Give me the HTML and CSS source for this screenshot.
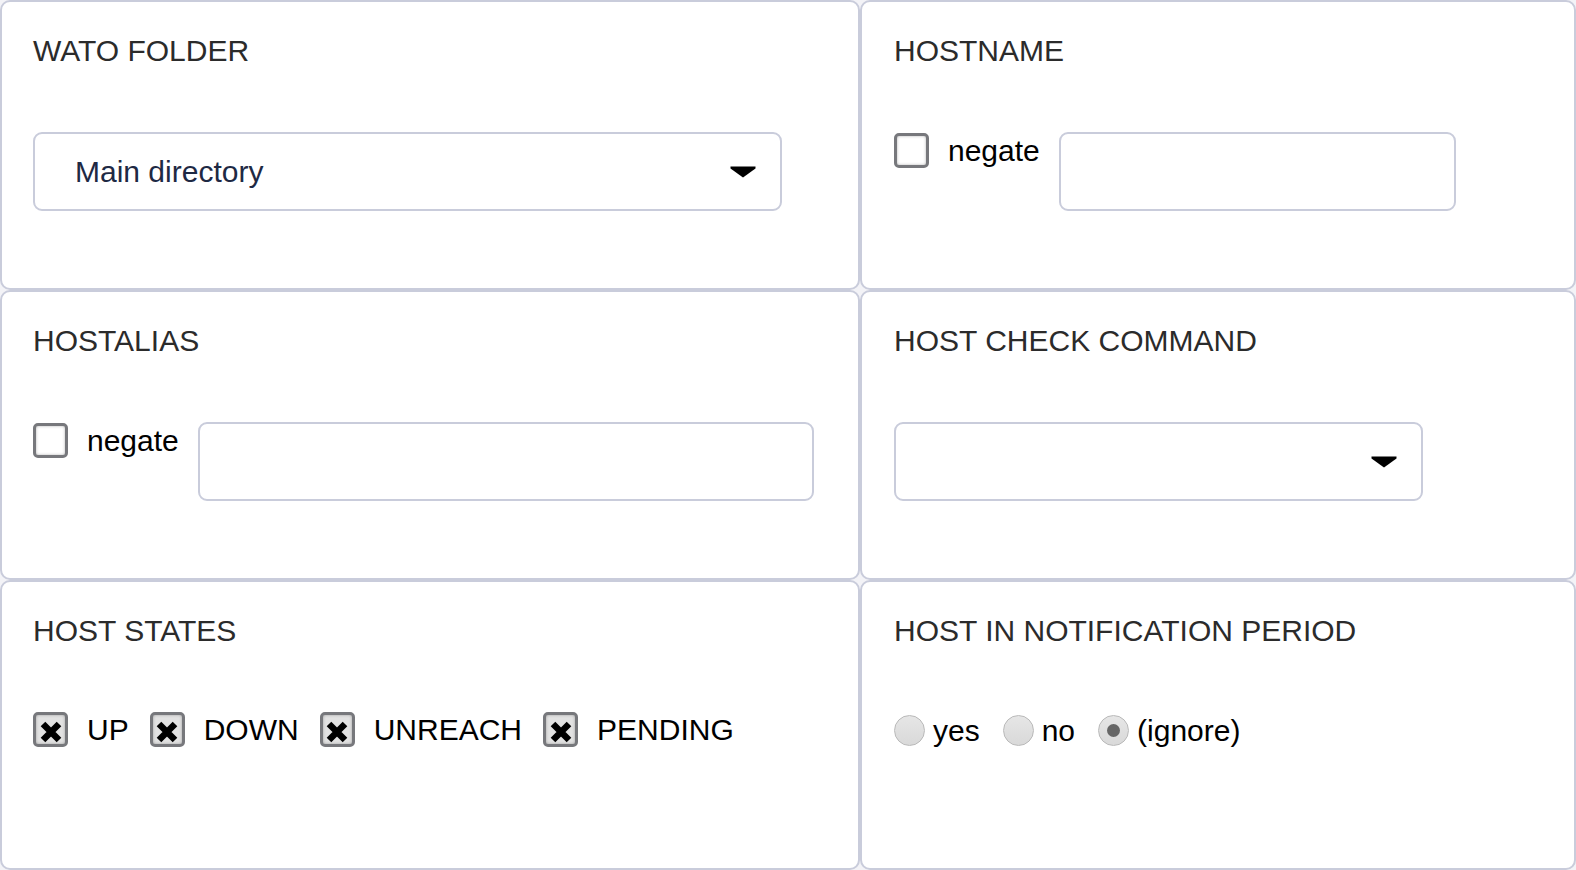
FILE: index.html
```html
<!DOCTYPE html>
<html>
<head>
<meta charset="utf-8">
<link rel="stylesheet" href="styles.css">
</head>
<body>
<div class="grid">
  <section class="card">
    <h2 class="legend">WATO FOLDER</h2>
    <div class="content">
      <div class="select select-folder">
        <span class="select-value">Main directory</span>
        <svg class="arrow" width="26" height="12" viewBox="0 0 26 12"><polygon points="0.5,0.5 25.5,0.5 25.5,2.5 13,11.5 0.5,2.5" fill="#000"/></svg>
      </div>
    </div>
  </section>
  <section class="card card-right">
    <h2 class="legend">HOSTNAME</h2>
    <div class="content row">
      <label class="check"><span class="box"></span><span class="check-text">negate</span></label>
      <div class="text-input input-hostname"></div>
    </div>
  </section>
  <section class="card">
    <h2 class="legend">HOSTALIAS</h2>
    <div class="content row">
      <label class="check"><span class="box"></span><span class="check-text">negate</span></label>
      <div class="text-input input-alias"></div>
    </div>
  </section>
  <section class="card card-right">
    <h2 class="legend">HOST CHECK COMMAND</h2>
    <div class="content">
      <div class="select select-command">
        <span class="select-value"></span>
        <svg class="arrow" width="26" height="12" viewBox="0 0 26 12"><polygon points="0.5,0.5 25.5,0.5 25.5,2.5 13,11.5 0.5,2.5" fill="#000"/></svg>
      </div>
    </div>
  </section>
  <section class="card">
    <h2 class="legend">HOST STATES</h2>
    <div class="content row states">
      <label class="check state"><span class="box checked"><svg width="22" height="22" viewBox="0 0 22 22"><path d="M3 3 L19 19 M19 3 L3 19" stroke="#000" stroke-width="6.5"/></svg></span><span class="check-text">UP</span></label>
      <label class="check state"><span class="box checked"><svg width="22" height="22" viewBox="0 0 22 22"><path d="M3 3 L19 19 M19 3 L3 19" stroke="#000" stroke-width="6.5"/></svg></span><span class="check-text">DOWN</span></label>
      <label class="check state"><span class="box checked"><svg width="22" height="22" viewBox="0 0 22 22"><path d="M3 3 L19 19 M19 3 L3 19" stroke="#000" stroke-width="6.5"/></svg></span><span class="check-text">UNREACH</span></label>
      <label class="check state"><span class="box checked"><svg width="22" height="22" viewBox="0 0 22 22"><path d="M3 3 L19 19 M19 3 L3 19" stroke="#000" stroke-width="6.5"/></svg></span><span class="check-text">PENDING</span></label>
    </div>
  </section>
  <section class="card card-right">
    <h2 class="legend">HOST IN NOTIFICATION PERIOD</h2>
    <div class="content row radios">
      <label class="radio"><span class="dot"></span><span class="radio-text">yes</span></label>
      <label class="radio"><span class="dot"></span><span class="radio-text">no</span></label>
      <label class="radio"><span class="dot selected"></span><span class="radio-text">(ignore)</span></label>
    </div>
  </section>
</div>
</body>
</html>
```

FILE: styles.css
```css
html, body {
  margin: 0;
  padding: 0;
  background: #f3f3f7;
}

body {
  font-family: "Liberation Sans", Arial, sans-serif;
}

.grid {
  display: grid;
  grid-template-columns: 860px 716px;
  grid-template-rows: repeat(3, 290px);
  width: 1576px;
  height: 870px;
}

.card {
  box-sizing: border-box;
  background: #fff;
  border: 2px solid #c9ccdb;
  border-radius: 10px;
  padding: 32px 31px 0 31px;
}

.card-right {
  padding-left: 32px;
}

.legend {
  margin: 0;
  font-weight: normal;
  font-size: 30px;
  line-height: 34px;
  color: #2b2b2b;
}

.content {
  margin-top: 64px;
}

.row {
  display: flex;
  align-items: flex-start;
}

.select {
  box-sizing: border-box;
  height: 79px;
  border: 2px solid #c9ccdb;
  border-radius: 9px;
  background: #fff;
  display: flex;
  align-items: center;
  justify-content: space-between;
  padding: 0 24px 0 40px;
}

.select-folder {
  width: 749px;
}

.select-command {
  width: 529px;
}

.select-value {
  font-size: 30px;
  color: #1e2944;
}

.arrow {
  display: block;
  margin-top: 1px;
}

.text-input {
  box-sizing: border-box;
  height: 79px;
  border: 2px solid #c9ccdb;
  border-radius: 9px;
  background: #fff;
}

.input-hostname {
  width: 397px;
  margin-left: 19px;
}

.input-alias {
  width: 616px;
  margin-left: 19px;
}

.check {
  display: flex;
  align-items: center;
  height: 35px;
  margin-top: 1px;
}

.box {
  box-sizing: border-box;
  width: 35px;
  height: 35px;
  flex: none;
  border: 3px solid #77787c;
  border-radius: 5px;
  background: #fff;
  box-shadow: inset 0 0 3px rgba(0, 0, 0, 0.3);
  display: flex;
  align-items: center;
  justify-content: center;
}

.box.checked {
  background: #e2e2e2;
}

.box.checked svg {
  display: block;
  margin-top: 4px;
}

.check-text {
  margin-left: 19px;
  font-size: 30px;
  line-height: 35px;
  color: #000;
}

.states {
  align-items: center;
}

.state {
  margin-right: 21px;
  margin-top: 0;
}

.radios {
  align-items: center;
  padding-top: 3px;
}

.radio {
  display: flex;
  align-items: center;
  margin-right: 23px;
}

.dot {
  box-sizing: border-box;
  width: 31px;
  height: 31px;
  flex: none;
  border-radius: 50%;
  border: 1px solid #b9b9b9;
  background: linear-gradient(#e6e6e6, #d9d9d9);
  display: flex;
  align-items: center;
  justify-content: center;
}

.dot.selected::after {
  content: "";
  width: 13px;
  height: 13px;
  border-radius: 50%;
  background: #666;
}

.radio-text {
  margin-left: 8px;
  font-size: 30px;
  line-height: 31px;
  color: #000;
}
```
